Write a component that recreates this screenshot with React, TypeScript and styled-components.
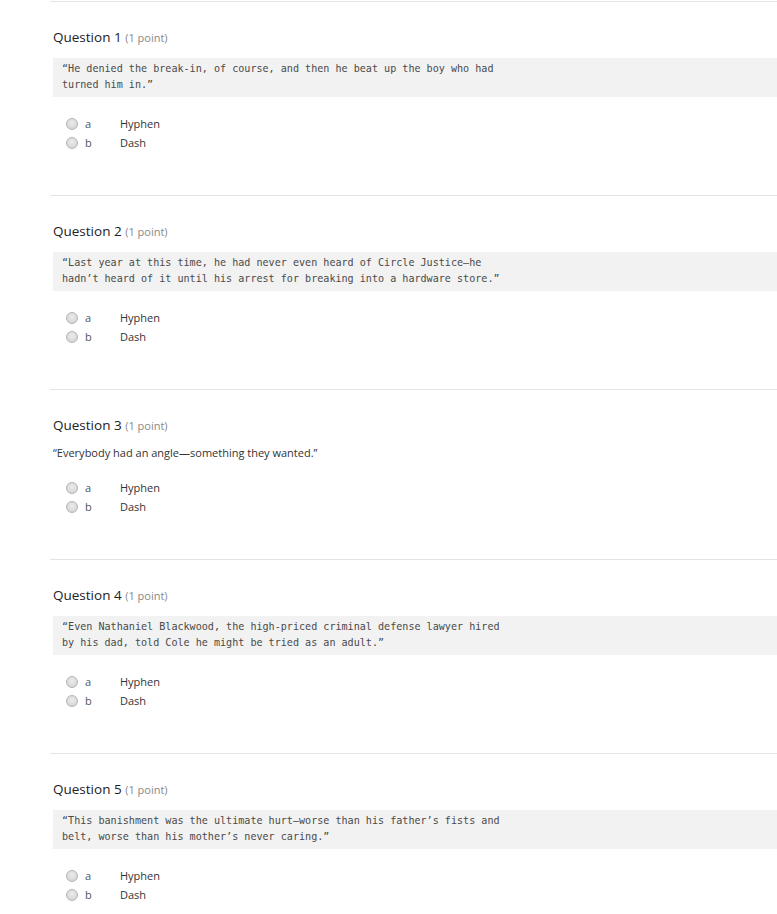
import React from "react";
import styled, { createGlobalStyle } from "styled-components";

const Global = createGlobalStyle`
  html, body { margin: 0; padding: 0; background: #fff; }
  body { font-family: "Open Sans", "Noto Sans", Arial, sans-serif; color: #333; }
`;

const Page = styled.div`
  padding-top: 1px;
  padding-left: 50px;
`;

const Section = styled.section`
  border-top: 1px solid #e4e4e4;
  padding: 26px 0 43px 3px;
`;

const Title = styled.h2`
  margin: 0;
  font-size: 13.5px;
  line-height: 18px;
  font-weight: 400;
  color: #222;
`;

const Points = styled.span`
  font-size: 11px;
  color: #888;
`;

const Code = styled.div`
  margin-top: 11px;
  background: #f2f2f2;
  padding: 3px 9px 4px;
  font-family: "DejaVu Sans Mono", "Liberation Mono", monospace;
  font-size: 10.1px;
  line-height: 16px;
  height: 32px;
  color: #4a4a4a;
  white-space: pre;
`;

const Plain = styled.div`
  margin-top: 10px;
  font-size: 11px;
  line-height: 16px;
  color: #333;
`;

const Options = styled.div`
  margin-top: 17px;
  display: flex;
  flex-direction: column;
`;

const Row = styled.label`
  display: flex;
  align-items: center;
  height: 19px;
  padding-left: 13px;
  font-size: 11px;
  color: #333;
`;

const Radio = styled.span`
  width: 10px;
  height: 10px;
  border-radius: 50%;
  border: 1px solid #b5b5b5;
  background: radial-gradient(circle at 50% 40%, #ececec 0%, #cfcfcf 100%);
  box-sizing: content-box;
  flex: none;
`;

const Letter = styled.span`
  width: 42px;
  padding-left: 7px;
  box-sizing: border-box;
  color: #555;
`;

type Q = { n: number; code?: string; text?: string };

const questions: Q[] = [
  {
    n: 1,
    code: "“He denied the break-in, of course, and then he beat up the boy who had\nturned him in.”",
  },
  {
    n: 2,
    code: "“Last year at this time, he had never even heard of Circle Justice—he\nhadn’t heard of it until his arrest for breaking into a hardware store.”",
  },
  { n: 3, text: "“Everybody had an angle—something they wanted.”" },
  {
    n: 4,
    code: "“Even Nathaniel Blackwood, the high-priced criminal defense lawyer hired\nby his dad, told Cole he might be tried as an adult.”",
  },
  {
    n: 5,
    code: "“This banishment was the ultimate hurt—worse than his father’s fists and\nbelt, worse than his mother’s never caring.”",
  },
];

export default function App() {
  return (
    <>
      <Global />
      <Page>
        {questions.map((q) => (
          <Section key={q.n}>
            <Title>
              Question {q.n} <Points>(1 point)</Points>
            </Title>
            {q.code ? <Code>{q.code}</Code> : <Plain>{q.text}</Plain>}
            <Options>
              <Row>
                <Radio />
                <Letter>a</Letter>
                <span>Hyphen</span>
              </Row>
              <Row>
                <Radio />
                <Letter>b</Letter>
                <span>Dash</span>
              </Row>
            </Options>
          </Section>
        ))}
      </Page>
    </>
  );
}
